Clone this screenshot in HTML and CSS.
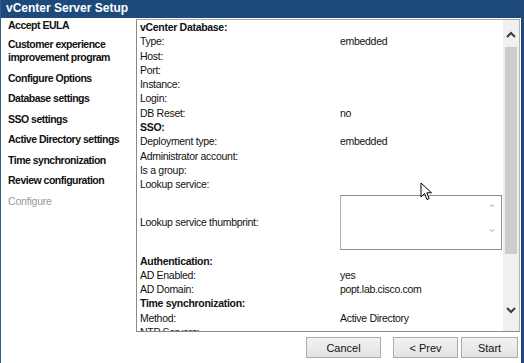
FILE: index.html
```html
<!DOCTYPE html>
<html lang="en">
<head>
  <meta charset="UTF-8" />
  <title>vCenter Server Setup</title>
  <link rel="stylesheet" href="styles.css">
</head>
<body>
  <div class="window">
    <div class="titlebar">vCenter Server Setup</div>

    <div class="main">
      <!-- Wizard steps -->
      <ul class="steps">
        <li>Accept EULA</li>
        <li>Customer experience<br>improvement program</li>
        <li>Configure Options</li>
        <li>Database settings</li>
        <li>SSO settings</li>
        <li>Active Directory settings</li>
        <li>Time synchronization</li>
        <li>Review configuration</li>
        <li class="pending">Configure</li>
      </ul>

      <!-- Summary panel -->
      <div class="panel">
        <div class="summary">
          <div class="head">vCenter Database:</div>
          <div>Type:</div><div>embedded</div>
          <div>Host:</div><div></div>
          <div>Port:</div><div></div>
          <div>Instance:</div><div></div>
          <div>Login:</div><div></div>
          <div>DB Reset:</div><div>no</div>

          <div class="head">SSO:</div>
          <div>Deployment type:</div><div>embedded</div>
          <div>Administrator account:</div><div></div>
          <div>Is a group:</div><div></div>
          <div>Lookup service:</div><div></div>
          <div>Lookup service thumbprint:</div>
          <div class="thumb-cell">
            <div class="thumb-box">
              <span class="spin">&#8963;</span>
              <span class="spin down">&#8964;</span>
            </div>
          </div>

          <div class="head">Authentication:</div>
          <div>AD Enabled:</div><div>yes</div>
          <div>AD Domain:</div><div>popt.lab.cisco.com</div>

          <div class="head">Time synchronization:</div>
          <div>Method:</div><div>Active Directory</div>
          <div>NTP Servers:</div><div></div>
        </div>

        <div class="scrollbar">
          <svg class="arrow" width="10" height="8" viewBox="0 0 10 8"><path d="M1 6 L5 2 L9 6" fill="none" stroke="#3c3c3c" stroke-width="2"/></svg>
          <div class="track"><div class="thumb"></div></div>
          <svg class="arrow" width="10" height="8" viewBox="0 0 10 8"><path d="M1 2 L5 6 L9 2" fill="none" stroke="#3c3c3c" stroke-width="2"/></svg>
        </div>
      </div>
    </div>

    <div class="buttons">
      <button class="btn cancel">Cancel</button>
      <button class="btn prev">&lt; Prev</button>
      <button class="btn start">Start</button>
    </div>

    <svg class="cursor" width="13" height="19" viewBox="0 0 13 19">
      <path d="M1 1 L1 15 L4.5 11.5 L7 17.5 L9.2 16.6 L6.8 10.8 L11.5 10.8 Z" fill="#fff" stroke="#000" stroke-width="1"/>
    </svg>
  </div>
</body>
</html>
```

FILE: styles.css
```css
* {
  box-sizing: border-box;
}

body {
  margin: 0;
  font-family: "Liberation Sans", Arial, sans-serif;
  font-size: 11px;
  color: #111;
  background: #fff;
}

.window {
  position: relative;
  width: 524px;
  height: 363px;
  border-left: 1px solid #2f5d8c;
  border-right: 3px solid #1f4a79;
  overflow: hidden;
}

.titlebar {
  height: 18px;
  line-height: 17px;
  padding-left: 5px;
  background: #1d4a7b;
  color: #fff;
  font-weight: bold;
  font-size: 12px;
}

.main {
  display: flex;
  padding-top: 1px;
}

.steps {
  list-style: none;
  margin: 0;
  padding: 0 0 0 7px;
  width: 135px;
  font-size: 10.5px;
  font-weight: bold;
  line-height: 13px;
  letter-spacing: -0.5px;
}

.steps li {
  margin-bottom: 7.5px;
}

.steps li:first-child {
  margin-bottom: 6px;
}

.steps .pending {
  font-weight: normal;
  color: #999;
  letter-spacing: -0.2px;
}

.panel {
  display: flex;
  align-items: flex-start;
  width: 384px;
  height: 313px;
  border: 1px solid #8a8a8a;
  border-top-color: #a8a8a8;
  border-right-color: #b4b4b4;
  overflow: hidden;
}

.summary {
  flex: 1;
  display: grid;
  grid-template-columns: 200px 1fr;
  align-items: center;
  padding-left: 3px;
  font-size: 10.5px;
  line-height: 14.3px;
  letter-spacing: -0.3px;
}

.summary .head {
  grid-column: 1 / 3;
  font-weight: bold;
}

.thumb-cell {
  padding: 3px 0 4px;
}

.thumb-box {
  position: relative;
  width: 162px;
  height: 55px;
  border: 1px solid #8c8c8c;
  border-left-color: #b0b0b0;
}

.spin {
  position: absolute;
  right: 4px;
  top: 7px;
  color: #c4c4c4;
  font-size: 12px;
  line-height: 12px;
}

.spin.down {
  top: 26px;
}

.scrollbar {
  align-self: stretch;
  width: 16px;
  display: flex;
  flex-direction: column;
  align-items: center;
  background: #f0f0f0;
  padding: 11px 0 17px;
}

.track {
  flex: 1;
  width: 12px;
  padding: 8px 0 52px;
}

.thumb {
  height: 100%;
  background: #cdcdcd;
}

.buttons {
  display: flex;
  justify-content: flex-end;
  gap: 11px;
  padding: 5px 3px 0 0;
}

.btn {
  height: 21px;
  font-family: "Liberation Sans", Arial, sans-serif;
  font-size: 11px;
  color: #111;
  border: 1px solid #acacac;
  background: linear-gradient(#f2f2f2, #e3e3e3);
  padding: 0;
}

.cancel { width: 75px; }
.prev { width: 65px; margin-left: 1px; }
.start { width: 57px; margin-left: -8px; }

.cursor {
  position: absolute;
  left: 419px;
  top: 182px;
}
```
